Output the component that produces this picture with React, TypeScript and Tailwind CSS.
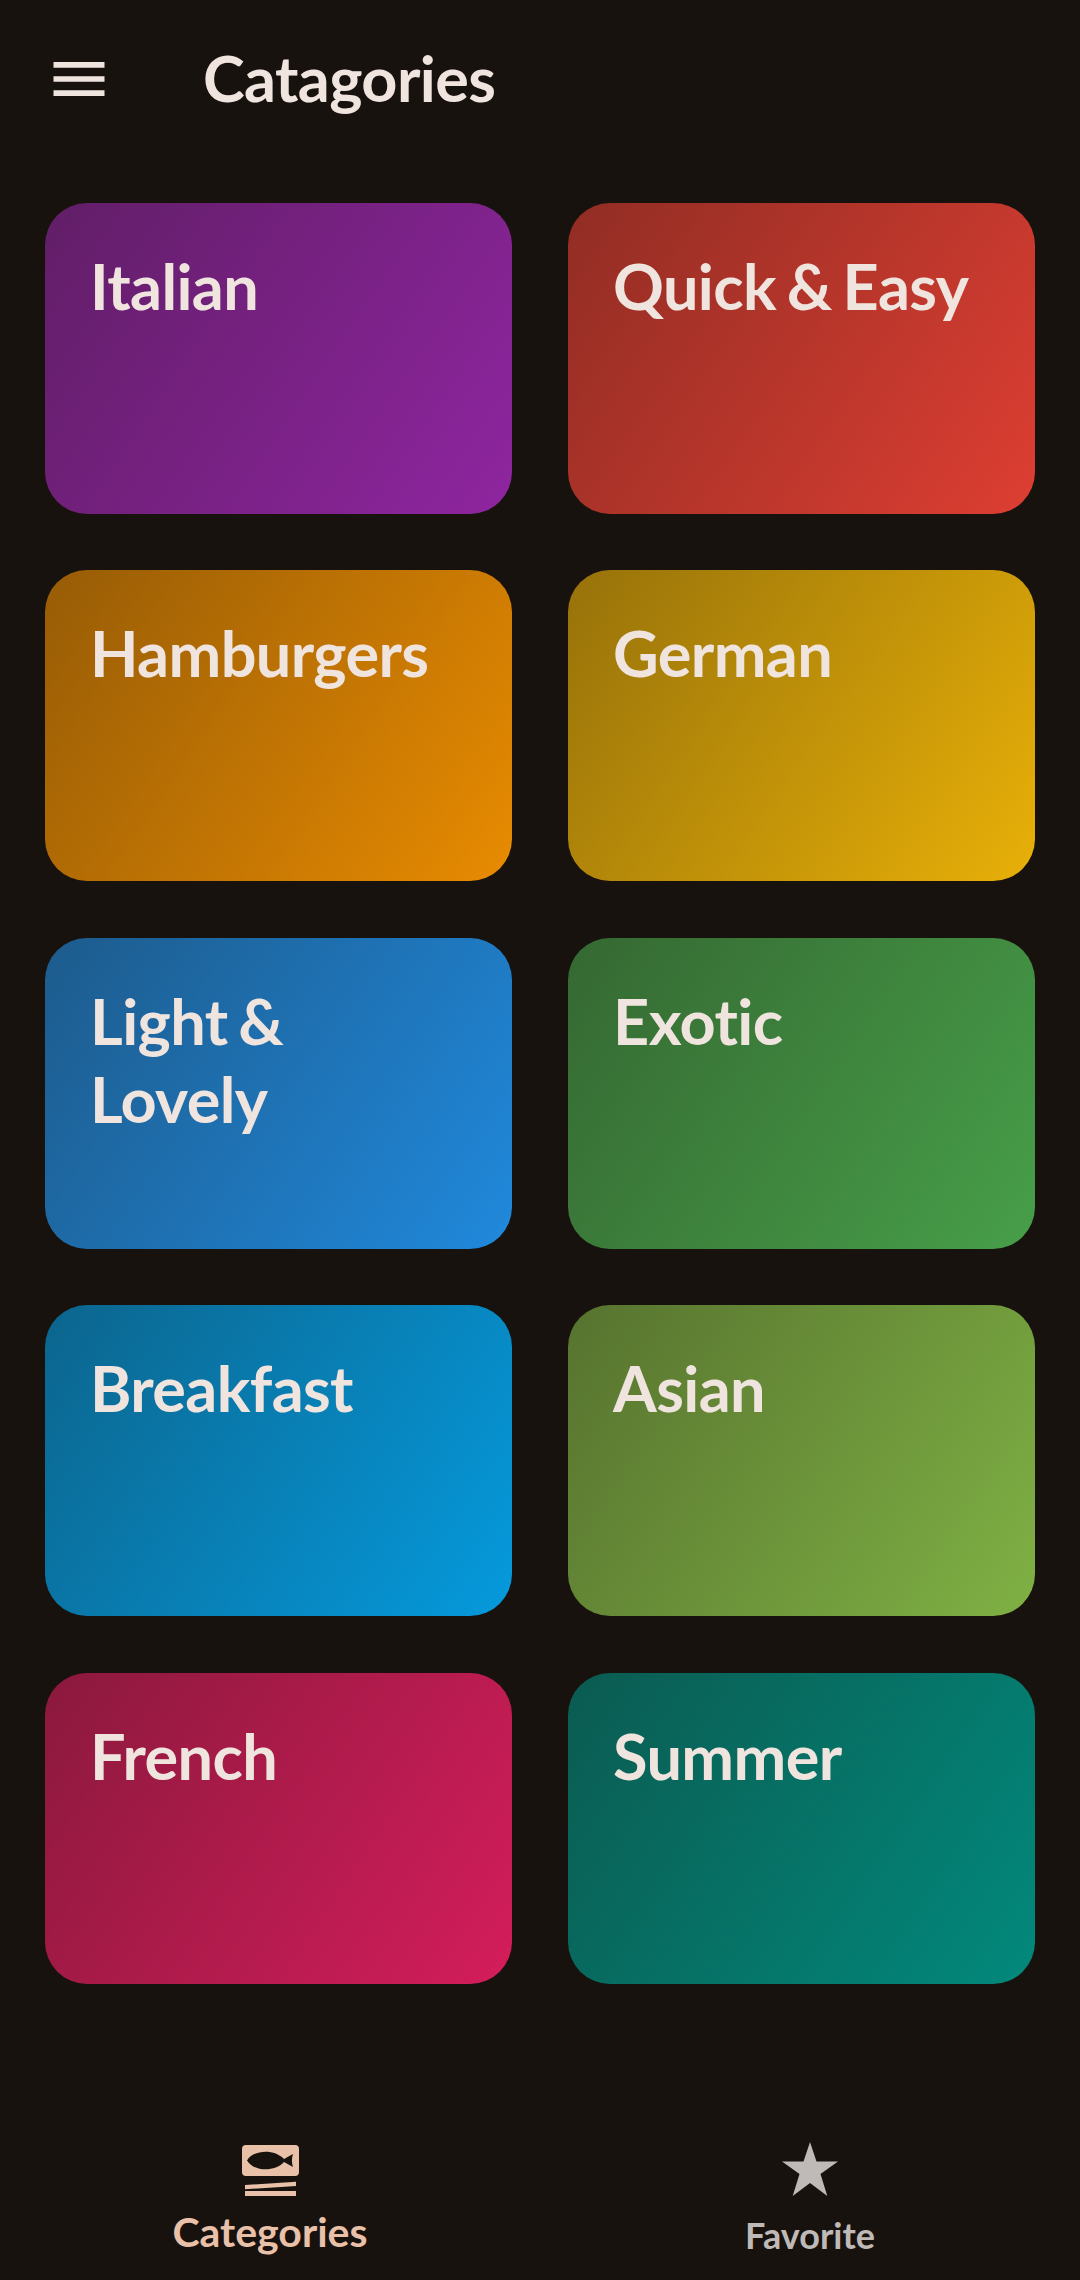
const categories = [
  { title: 'Italian', bg: 'bg-[linear-gradient(124deg,#611e67,#8f25a0)]' },
  { title: 'Quick & Easy', bg: 'bg-[linear-gradient(124deg,#912d24,#de3e32)]' },
  { title: 'Hamburgers', bg: 'bg-[linear-gradient(124deg,#975c06,#e88b01)]' },
  { title: 'German', bg: 'bg-[linear-gradient(124deg,#97720a,#e8b008)]' },
  { title: 'Light & Lovely', bg: 'bg-[linear-gradient(124deg,#1d5b8c,#2089dc)]' },
  { title: 'Exotic', bg: 'bg-[linear-gradient(124deg,#356832,#479f49)]' },
  { title: 'Breakfast', bg: 'bg-[linear-gradient(124deg,#0c658d,#059add)]' },
  { title: 'Asian', bg: 'bg-[linear-gradient(124deg,#57732f,#7fb144)]' },
  { title: 'French', bg: 'bg-[linear-gradient(124deg,#8b193d,#d41d5b)]' },
  { title: 'Summer', bg: 'bg-[linear-gradient(124deg,#0b5b51,#02897c)]' },
]

function MenuIcon() {
  return (
    <svg width="68" height="68" viewBox="0 0 24 24" fill="#f0e4df">
      <path d="M3 18h18v-2H3v2zm0-5h18v-2H3v2zm0-7v2h18V6H3z" />
    </svg>
  )
}

function FishIcon() {
  return (
    <svg width="57" height="51" viewBox="0 0 57 51" fill="#e9c0a8">
      <path
        fillRule="evenodd"
        d="M4 0H53A4 4 0 0 1 57 4V27A4 4 0 0 1 53 31H4A4 4 0 0 1 0 27V4A4 4 0 0 1 4 0ZM5 15.500C12 4 33 4 42 14L51 9C49.500 13.500 49.500 17.500 51 22L42 17C33 27 12 27 5 15.500Z"
      />
      <path d="M3 40L54 36.700V41L3 44.300Z" />
      <rect x="3" y="46" width="51" height="5" />
    </svg>
  )
}

function StarIcon() {
  return (
    <svg width="56" height="54" viewBox="0 0 56 54" fill="#bfbab7">
      <path d="M28 0L34.500 19.500H56L38.500 32L45.300 54L28 41L10.700 54L17.500 32L0 19.500H21.500Z" />
    </svg>
  )
}

export default function App() {
  return (
    <div className="flex h-[2280px] w-[1080px] flex-col overflow-hidden bg-[#18120e] font-['Lato','Liberation_Sans',sans-serif]">
      {/* Header */}
      <header className="flex h-[158px] shrink-0 items-center pl-[45px]">
        <MenuIcon />
        <h1 className="ml-[90px] mt-[-4px] text-[63px] font-bold leading-none tracking-[-0.6px] text-[#f0e4df]">Catagories</h1>
      </header>

      {/* Category grid */}
      <main className="mt-[45px] grid grid-cols-2 auto-rows-[311px] gap-x-[56px] gap-y-[56.4px] px-[45px]">
        {categories.map((cat) => (
          <div key={cat.title} className={`rounded-[42px] pl-[45px] pr-[60px] pt-[44px] ${cat.bg}`}>
            <h2 className="text-[63px] font-bold leading-[78px] tracking-[-0.6px] [word-spacing:-4px] text-[#f0e4df]">{cat.title}</h2>
          </div>
        ))}
      </main>

      {/* Bottom navigation */}
      <nav className="mt-auto grid h-[148px] grid-cols-2">
        <div className="flex flex-col items-center pt-[13px]">
          <FishIcon />
          <span className="mt-[13px] text-[41px] font-bold leading-[46px] text-[#e9c0a8]">Categories</span>
        </div>
        <div className="flex flex-col items-center pt-[10px]">
          <StarIcon />
          <span className="mt-[16px] text-[36px] font-bold leading-[46px] text-[#bfbab7]">Favorite</span>
        </div>
      </nav>
    </div>
  )
}
